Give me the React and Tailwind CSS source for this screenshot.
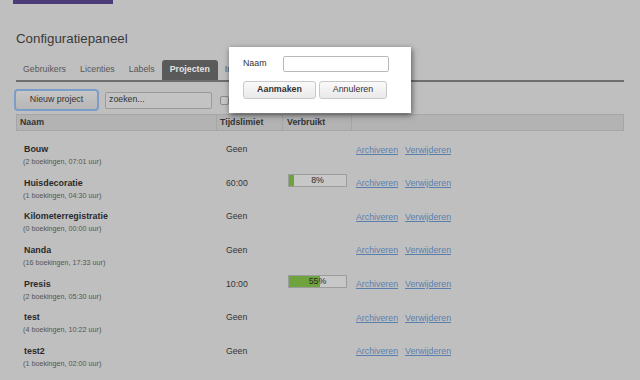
import React from "react";

const rows = [
  { name: "Bouw", sub: "(2 boekingen, 07:01 uur)", time: "Geen" },
  { name: "Huisdecoratie", sub: "(1 boekingen, 04:30 uur)", time: "60:00", pct: 8 },
  { name: "Kilometerregistratie", sub: "(0 boekingen, 00:00 uur)", time: "Geen" },
  { name: "Nanda", sub: "(16 boekingen, 17:33 uur)", time: "Geen" },
  { name: "Presis", sub: "(2 boekingen, 05:30 uur)", time: "10:00", pct: 55 },
  { name: "test", sub: "(4 boekingen, 10:22 uur)", time: "Geen" },
  { name: "test2", sub: "(1 boekingen, 02:00 uur)", time: "Geen" },
];

const tabs = ["Gebruikers", "Licenties", "Labels", "Projecten", "Instellingen", "Exporteren", "Abonnementen"];

export default function App() {
  return (
    <div className="relative w-[640px] h-[380px] overflow-hidden bg-[#bfbfbf] font-['Liberation_Sans',Arial,sans-serif] text-[#2b2b2b]">
      <div className="ml-[13px] w-[100px] h-[4px] bg-[#4b3b78]" />
      <div className="px-4">
        <div className="mt-[25px] text-[13.3px] leading-[20px] text-[#3a3a3a]">Configuratiepaneel</div>
        <div className="mt-[11px] flex border-b-2 border-[#6e6e6e]">
          {tabs.map((t) => (
            <div
              key={t}
              className={
                t === "Projecten"
                  ? "h-[20px] px-[8px] flex items-center rounded-t-[3px] bg-[#5a5a5a] text-[#e4e4e4] font-bold text-[8.8px]"
                  : "h-[20px] px-[7px] flex items-center text-[#585858] text-[8.8px]"
              }
            >
              {t}
            </div>
          ))}
        </div>
        <div className="mt-[7px] flex items-center h-[22px]">
          <div className="ml-[-2px] w-[85px] h-[22px] rounded-[4px] border-2 border-[#7b9dc9] bg-gradient-to-b from-[#c6c6c6] to-[#b6b6b6] flex items-center justify-center text-[8.8px] text-[#333]">
            Nieuw project
          </div>
          <div className="ml-[6px] w-[107px] h-[17px] border border-[#9a9a9a] bg-[#c3c3c3] rounded-[2px] flex items-center pl-[3px] text-[8.8px] text-[#333]">
            zoeken...
          </div>
          <div className="ml-[8px] w-[9px] h-[9px] border border-[#8a8a8a] rounded-[2px] bg-[#c6c6c6]" />
        </div>
        <div className="mt-[3px] h-[17px] border border-[#a6a6a6] bg-[#b3b3b3] grid grid-cols-[199px_66px_69px_1fr] text-[8.8px] font-bold text-[#333]">
          <div className="pl-[3px] flex items-center">Naam</div>
          <div className="pl-[3px] flex items-center border-l border-[#a6a6a6]">Tijdslimiet</div>
          <div className="pl-[4px] flex items-center border-l border-[#a6a6a6]">Verbruikt</div>
          <div className="border-l border-[#a6a6a6]" />
        </div>
        <div className="mt-[3px]">
          {rows.map((r) => (
            <div key={r.name} className="h-[33.67px] grid grid-cols-[200px_66px_69px_1fr]">
              <div className="pt-[8px]">
                <div className="pl-[8px] text-[8.9px] font-bold leading-[14px] text-[#2a2a2a]">{r.name}</div>
                <div className="pl-[7px] text-[7.2px] leading-[12px] text-[#555]">{r.sub}</div>
              </div>
              <div className="pt-[8px] pl-[10px] text-[8.7px] leading-[14px] text-[#333]">{r.time}</div>
              <div className="pt-[6.5px] pl-[6px]">
                {r.pct != null && (
                  <div className="relative w-[59px] h-[13px] border border-[#9c9c9c] bg-[#c7c7c7]">
                    <div
                      className="absolute left-0 top-0 bottom-0 bg-[#6fa33d]"
                      style={{ width: `${r.pct}%` }}
                    />
                    <div className="absolute inset-0 flex items-center justify-center text-[8.8px] text-[#2a2a2a]">
                      {r.pct}%
                    </div>
                  </div>
                )}
              </div>
              <div className="pt-[8.5px] pl-[5px] flex gap-[7px] text-[8.8px] leading-[14px] text-[#5a7fae]">
                <span className="underline">Archiveren</span>
                <span className="underline">Verwijderen</span>
              </div>
            </div>
          ))}
        </div>
      </div>

      <div className="absolute left-[229px] top-[47px] w-[182px] h-[66px] bg-white shadow-[1px_2px_6px_rgba(0,0,0,0.55)] px-[14px] pt-[9px]">
        <div className="flex items-center h-[16px]">
          <div className="w-[40px] text-[8.8px] text-[#333]">Naam</div>
          <div className="w-[106px] h-[16px] border border-[#b8b8b8] rounded-[2px] bg-white" />
        </div>
        <div className="mt-[9px] flex gap-[3px]">
          <div className="w-[73px] h-[18px] rounded-[3px] border border-[#c8c8c8] bg-gradient-to-b from-[#fafafa] to-[#e9e9e9] flex items-center justify-center text-[8.9px] font-bold text-[#333]">
            Aanmaken
          </div>
          <div className="w-[68px] h-[18px] rounded-[3px] border border-[#c8c8c8] bg-gradient-to-b from-[#fafafa] to-[#e9e9e9] flex items-center justify-center text-[8.9px] text-[#333]">
            Annuleren
          </div>
        </div>
      </div>
    </div>
  );
}
